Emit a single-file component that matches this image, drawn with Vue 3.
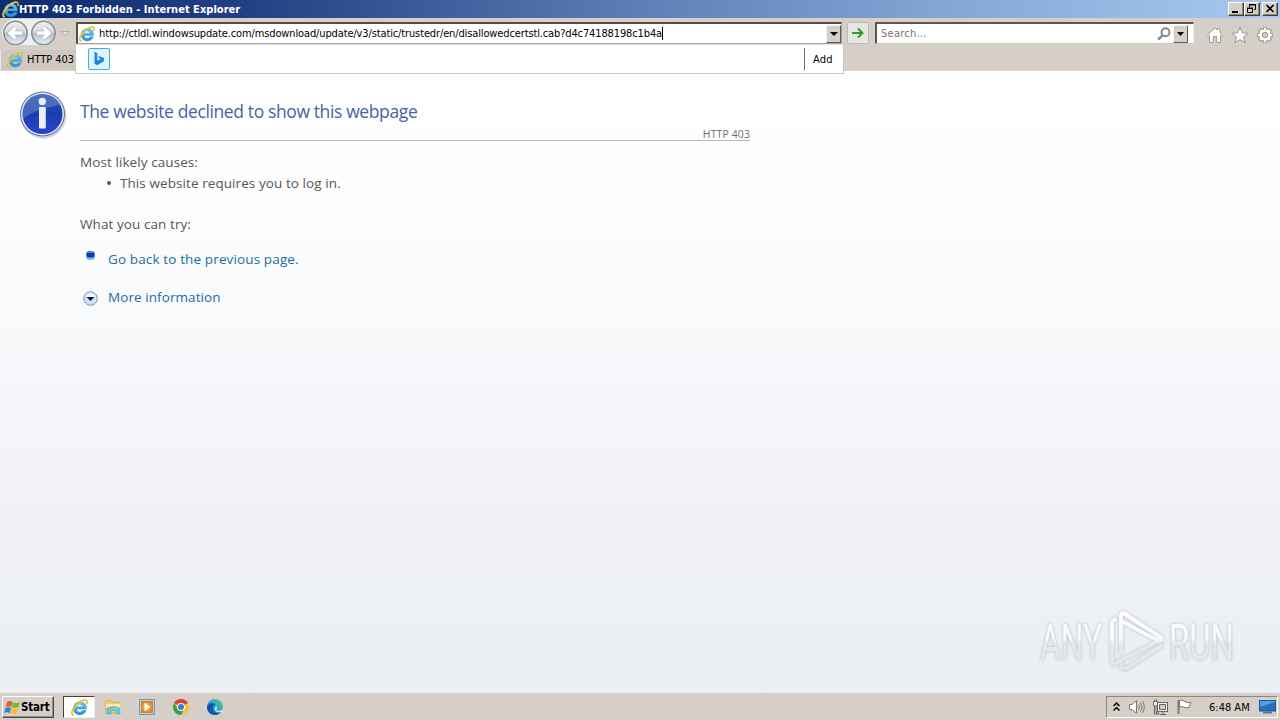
<script setup>
const crumbs = {
  title: 'HTTP 403 Forbidden - Internet Explorer',
  url: 'http://ctldl.windowsupdate.com/msdownload/update/v3/static/trustedr/en/disallowedcertstl.cab?d4c74188198c1b4a',
}
</script>

<template>
  <div class="screen">
    <svg class="defs" width="0" height="0">
      <defs>
        <linearGradient id="eBlue" x1="0" y1="0" x2="0" y2="1">
          <stop offset="0" stop-color="#6acbf5" /><stop offset="1" stop-color="#2b8ad0" />
        </linearGradient>
        <linearGradient id="navBall" x1="0" y1="0" x2="0" y2="1">
          <stop offset="0" stop-color="#f0f1f3" /><stop offset=".48" stop-color="#d5d9de" />
          <stop offset=".52" stop-color="#b6bec8" /><stop offset="1" stop-color="#e6f1fa" />
        </linearGradient>
        <linearGradient id="infoBlue" x1="0" y1="0" x2="0" y2="1">
          <stop offset="0" stop-color="#2b55a8" /><stop offset=".5" stop-color="#1c3cae" /><stop offset="1" stop-color="#2a46cc" />
        </linearGradient>
        <linearGradient id="edge" x1="0" y1="1" x2="1" y2="0">
          <stop offset="0" stop-color="#1459a8" /><stop offset=".45" stop-color="#1b9fe0" /><stop offset="1" stop-color="#5fd36a" />
        </linearGradient>
        <linearGradient id="wm" gradientUnits="userSpaceOnUse" x1="0" y1="0" x2="0" y2="66">
          <stop offset="0" stop-color="#fdfdfe" /><stop offset=".45" stop-color="#f8f9fb" /><stop offset=".52" stop-color="#e6e8eb" /><stop offset="1" stop-color="#e2e4e8" />
        </linearGradient>
        <symbol id="ie" viewBox="0 0 16 16">
          <path d="M14.3 10.7H10.8C10.3 11.8 9.3 12.3 8.2 12.3C6.5 12.3 5.4 11.2 5.3 9.5H14.5C14.9 5.4 12.5 2.6 8.6 2.6C4.9 2.6 2.1 5.1 2.1 8.8C2.1 12.5 4.7 15 8.2 15C11.2 15 13.4 13.4 14.3 10.7ZM5.4 7.2C5.6 5.8 6.8 4.9 8.3 4.9C9.8 4.9 11 5.8 11.1 7.2Z" fill="url(#eBlue)" stroke="#3a90c8" stroke-width=".4" fill-rule="evenodd" />
          <path d="M2.7 15.2C-.3 15 .4 11 3.3 7.3C6.7 2.8 12 .1 14.3 1.2C15.4 1.8 15.2 3.4 14.6 4.8" fill="none" stroke="#e8b820" stroke-width="1.5" />
          <path d="M2.3 14.3C.7 13.3 2 10 4.3 7.1C7.4 3.4 11.5 1.3 13.7 1.8" fill="none" stroke="#f9e064" stroke-width=".7" />
        </symbol>
      </defs>
    </svg>

    <header class="titlebar">
      <svg class="ie-title" width="17" height="17"><use href="#ie" /></svg>
      <span class="title-text">{{ crumbs.title }}</span>
      <div class="win-buttons">
        <span class="wbtn"><svg width="14" height="12"><path d="M3 9h6" stroke="#000" stroke-width="2" /></svg></span>
        <span class="wbtn"><svg width="14" height="12" fill="none" stroke="#000"><path d="M4.500 4V1.500h6v5H9M4 2h7M2.500 5.500h5v4h-5zM2 5h6" /></svg></span>
        <span class="wbtn close"><svg width="14" height="12"><path d="M3.500 2l7 7M10.500 2l-7 7" stroke="#000" stroke-width="1.6" /></svg></span>
      </div>
    </header>

    <div class="navbar">
      <svg class="nav-balls" width="76" height="27" viewBox="0 0 76 27">
        <path d="M15 1H43C48 1 56 8 56 15C56 22 49 27 43 27H15C7 27 2 22 2 15C2 8 7 1 15 1Z" fill="#f1f2f3" opacity=".9" />
        <g stroke="#858b94" stroke-width="1.5" fill="url(#navBall)">
          <circle cx="15.500" cy="15" r="11.700" /><circle cx="43.500" cy="15" r="11.700" />
        </g>
        <g fill="none" stroke="#a9b0ba" stroke-width="5"><path d="M22.500 15H10M15.500 9.500L10 15L15.500 20.500" /><path d="M36.500 15H49M43.500 9.500L49 15L43.500 20.500" /></g>
        <g fill="none" stroke="#fff" stroke-width="3.500"><path d="M22 15H10M15.500 9.500L10 15L15.500 20.500" /><path d="M37 15H49M43.500 9.500L49 15L43.500 20.500" /></g>
        <path d="M61.500 13.500h8l-4 4z" fill="#e4e1dc" stroke="#b0aca6" />
      </svg>
      <div class="address">
        <svg width="16" height="16"><use href="#ie" /></svg>
        <span class="url">{{ crumbs.url }}</span><i class="caret"></i>
        <span class="drop"><svg width="8" height="4"><path d="M0 0h8L4 4z" /></svg></span>
      </div>
      <div class="go"><svg width="14" height="12" fill="none" stroke="#2f9a20" stroke-width="2"><path d="M1 6h10M7 1.500L11.500 6L7 10.500" /></svg></div>
      <div class="search">
        <span class="placeholder">Search...</span>
        <svg class="lens" width="14" height="14" fill="none" stroke="#85878a" stroke-width="1.900"><circle cx="8.500" cy="5.300" r="4" /><path d="M5.700 8.100L1.200 12.600" stroke-width="2.600" /></svg>
        <span class="drop"><svg width="7" height="4"><path d="M0 0h7L3.500 4z" /></svg></span>
      </div>
      <div class="tools">
        <svg width="18" height="18" viewBox="0 0 18 18"><path d="M1.500 9L9 1.800L11.500 4.200V2.500H14V6.600L16.500 9L15.500 10.200L14.500 9.300V16.500H10.800V10.500H7.300V16.500H3.500V9.300L2.500 10.200Z" fill="#fff" stroke="#9b9a98" /></svg>
        <svg width="18" height="18" viewBox="0 0 18 18"><path d="M9 1.200L11.300 6.800L17 7.200L12.500 10.900L14 16.700L9 13.500L4 16.700L5.500 10.900L1 7.200L6.700 6.800Z" fill="#fff" stroke="#9b9a98" /></svg>
        <svg width="18" height="18" viewBox="0 0 18 18">
          <g stroke="#969492" stroke-width="4"><path d="M9 1V17M1 9H17M3.300 3.300L14.700 14.700M14.700 3.300L3.300 14.700" /><circle cx="9" cy="9" r="4.500" /></g>
          <g stroke="#fff" stroke-width="2"><path d="M9 1.800V16.200M1.800 9H16.200M4 4L14 14M14 4L4 14" /><circle cx="9" cy="9" r="4.800" fill="#fff" /></g>
          <circle cx="9" cy="9" r="2.700" fill="#d5cfc8" stroke="#969492" />
        </svg>
      </div>
    </div>

    <div class="tabs">
      <div class="tab"><svg width="16" height="16"><use href="#ie" /></svg><span>HTTP 403</span></div>
    </div>

    <div class="suggest">
      <svg width="22" height="22" viewBox="0 0 22 22"><rect x=".5" y=".5" width="21" height="21" rx="1.5" fill="#ddf4fd" stroke="#4babd8" /><path d="M6.500 4L9.300 5V12.800L12.600 11L11.100 10.300L10.200 8L16 10V13L9.300 17.200L6.500 15.600Z" fill="#1787e0" /></svg>
      <span class="add">Add</span>
    </div>

    <main class="page">
      <svg class="info" width="50" height="52" viewBox="0 0 50 52">
        <ellipse cx="25.500" cy="26" rx="23" ry="22.800" fill="#777" opacity=".28" />
        <circle cx="24.500" cy="24" r="22.500" fill="#5b6da4" />
        <circle cx="24.500" cy="24" r="21.500" fill="#e3eaf8" />
        <circle cx="24.500" cy="24" r="20" fill="url(#infoBlue)" />
        <path d="M4.500 24A20 20 0 0 1 42 14.500C32 17 13 21 5 29Z" fill="#7fa0d6" opacity=".4" />
        <circle cx="24.300" cy="11.500" r="3.700" fill="#eceef5" /><rect x="21" y="17" width="6.800" height="21.500" rx=".8" fill="#eceef5" />
      </svg>
      <div class="article">
        <h1><span>The website declined to show this webpage</span></h1>
        <div class="code"><span>HTTP 403</span></div>
        <p class="causes">Most likely causes:</p>
        <p class="cause"><i></i><span>This website requires you to log in.</span></p>
        <p class="try">What you can try:</p>
        <div class="link back"><svg width="11" height="11"><rect x="1" y="1" width="9" height="9" rx="3.500" fill="#80b8ee" /><rect x="1.500" y="1.500" width="8" height="6" rx="2.500" fill="#1735b0" /><path d="M2.500 2.500h6" stroke="#6687d4" /></svg><a>Go back to the previous page.</a></div>
        <div class="link more"><svg width="15" height="15"><circle cx="7.500" cy="7.500" r="6.800" fill="#cfe2f3" stroke="#8498ad" /><path d="M2.500 6A5.300 5.300 0 0 1 12.500 6Z" fill="#f5f9fc" /><path d="M3.500 6h8L7.500 10z" fill="#061c48" /></svg><a>More information</a></div>
      </div>
      <svg class="watermark" width="200" height="66" viewBox="0 0 200 66">
        <g class="wm-text" fill="url(#wm)">
          <text x="3" y="51" textLength="62" lengthAdjust="spacingAndGlyphs">ANY</text>
          <text x="132" y="51" textLength="65" lengthAdjust="spacingAndGlyphs">RUN</text>
        </g>
        <g class="wm-mark" transform="translate(72 0)" fill="none" stroke-linejoin="round" stroke-linecap="round" stroke="url(#wm)" stroke-width="4">
          <path d="M12 43V6Q13 3 16 5L52 28.500Q54 31 51 32.500L14 13" /><path d="M6 11Q3 11 3 15V53Q4 56 7 54L49 32" /><path d="M12 55V57Q14 61 18 59L52 37" />
        </g>
      </svg>
    </main>

    <footer class="taskbar">
      <div class="start">
        <svg width="17" height="17" viewBox="0 0 17 17"><path d="M3 3Q6 1 8.500 3L7.300 8Q5 6.500 1.700 8Z" fill="#e66027" /><path d="M9.300 3.300Q12 5 16 3L14.600 8Q11 9.500 8 8.200Z" fill="#77b82a" /><path d="M1.500 9Q4.500 7.600 7 9L5.700 14Q3 12.300 0 14Z" fill="#2f83d5" /><path d="M7.800 9.200Q11 10.700 14.400 9L13 14.300Q9.500 15.700 6.500 14.200Z" fill="#f8bd20" /></svg>
        <span>Start</span>
      </div>
      <div class="task active"><svg width="17" height="17"><use href="#ie" /></svg></div>
      <div class="task"><svg width="18" height="18" viewBox="0 0 18 18"><path d="M1.500 3L6 2L8 4H15V15H2Z" fill="#efcf64" stroke="#cba53e" stroke-width=".7" /><path d="M2 6H16V10H2Z" fill="#fbe99c" /><path d="M3.500 10Q9 7 15.500 10L16 16H12.500V12.500H7V16H3Z" fill="#77c9de" stroke="#49a9c6" stroke-width=".7" /></svg></div>
      <div class="task"><svg width="18" height="18" viewBox="0 0 18 18"><path d="M1.500 1.500H16.500V16.500H1.500Z" fill="#a9d6f3" stroke="#5f9cc4" /><rect x="3" y="3" width="12" height="12" fill="#ef7d15" /><circle cx="9" cy="9" r="4.800" fill="#f39b3c" /><path d="M6.500 4.800L12.500 9L6.500 13.200Z" fill="#fff" /></svg></div>
      <div class="task"><svg width="18" height="18" viewBox="0 0 18 18"><circle cx="9" cy="9" r="8" fill="#fac72e" /><path d="M9 9L2.100 5A8 8 0 0 1 15.900 5Z" fill="#dc3e32" /><path d="M2.100 5A8 8 0 0 0 9 17L12.300 11L6 11Z" fill="#30a14c" /><circle cx="9" cy="9" r="4" fill="#fff" /><circle cx="9" cy="9" r="3" fill="#3379df" /></svg></div>
      <div class="task"><svg width="18" height="18" viewBox="0 0 18 18"><circle cx="9" cy="9" r="8" fill="url(#edge)" /><path d="M1 9C2 5 7 4 10 7C8 6 6 9 7 12C8 15 12 16 15 14C9 20 1 16 1 9Z" fill="#1554a3" /><path d="M10 8C12 10 10 11 10.500 12C12 13.500 15.500 13 17 11V15L14.500 14C10 15 8 12 9 10Z" fill="#e1e2e0" /></svg></div>
      <div class="tray">
        <svg class="chev" width="7" height="10" fill="none" stroke="#000" stroke-width="1.5"><path d="M.5 4L3.500 1L6.500 4M.5 8.500L3.500 5.500L6.500 8.500" /></svg>
        <svg class="snd" width="18" height="16" fill="none" stroke="#797979"><path d="M1.500 5.500H4L8.500 1.500V14.500L4 10.500H1.500Z" fill="#fff" /><path d="M10.500 5.500Q12.500 8 10.500 10.500M12.500 3.500Q15.500 8 12.500 12.500M14.500 2Q18 8 14.500 14" /></svg>
        <svg class="net" width="18" height="17" fill="#f2f0ed" stroke="#666"><rect x="5.500" y="3.500" width="10" height="9" /><path d="M7.500 5.500h6v5h-6z" fill="#d5cfc8" /><path d="M8 15.500h6M11 13v2" /><path d="M1.500 2.500h4v4h-1.500v7.500h3v1h-4.500V6.500h-1zM2.500 .5v2M4.500 .5v2" /></svg>
        <svg class="flag" width="18" height="17"><path d="M3.500 1V15" stroke="#777" stroke-width="2" /><path d="M4.500 1.500Q7 .5 9 2Q12 4.500 16 3.500L14 8.500Q11 9.500 8.500 8Q6 7 4.500 8Z" fill="#fff" stroke="#777" /></svg>
        <span class="clock">6:48 AM</span>
        <svg class="desk" width="17" height="14"><rect x=".5" y=".5" width="16" height="10.500" fill="#2571bf" stroke="#17589c" /><path d="M1 7L16 2V1H1Z" fill="#4f9ee0" /><path d="M4 12.500h9" stroke="#68747c" stroke-width="2" /></svg>
      </div>
    </footer>
  </div>
</template>

<style>
html, body { overflow: hidden; }
</style>

<style scoped>
* { box-sizing: border-box; }
svg { display: block; flex: none; }
.screen { position: relative; width: 1280px; height: 720px; display: flex; flex-direction: column; overflow: hidden; font: 11px/14px "DejaVu Sans Condensed", "DejaVu Sans", sans-serif; color: #000; background: #d5cfc8; white-space: nowrap; }
.defs { position: absolute; }
.titlebar { height: 18px; flex: none; display: flex; align-items: center; padding: 0 2px; background: linear-gradient(90deg, #0c2b70 0%, #234184 20%, #6080b7 51%, #84a8d7 75%, #a7caf0 100%); }
.title-text { padding-top: 1px; color: #fff; font-weight: bold; letter-spacing: .03px; }
.win-buttons { margin-left: auto; display: flex; }
.wbtn { width: 16px; height: 14px; background: #d5cfc8; border: 1px solid; border-color: #fff #404040 #404040 #fff; box-shadow: inset -1px -1px #88847e; }
.wbtn.close { margin-left: 2px; }
.navbar { height: 27px; flex: none; display: flex; }
.address { width: 766px; height: 22px; margin-top: 4px; background: #fff; border: 1px solid #aaa59f; border-top: 2px solid #554b4b; border-left: 2px solid #554b4b; display: flex; align-items: center; padding-left: 1px; }
.url { margin-left: 4px; letter-spacing: -.13px; }
.caret { width: 1px; height: 13px; background: #000; }
.drop { width: 15px; height: 18px; margin-left: auto; background: #d5cfc8; border: 1px solid; border-color: #f7f5f2 #5e5b57 #5e5b57 #f7f5f2; display: flex; align-items: center; justify-content: center; }
.go { width: 22px; height: 22px; margin: 4px 0 0 5px; border: 1px solid #bdbab4; border-radius: 2px; background: #e7e6e3; display: flex; align-items: center; justify-content: center; }
.search { width: 319px; height: 22px; margin: 4px 0 0 6px; padding: 0 5px 0 4px; background: #fff; border-top: 2px solid #5c5551; border-left: 2px solid #5c5551; border-right: 1px solid #eee; border-bottom: 1px solid #ccc8c2; display: flex; align-items: center; }
.placeholder { color: #757575; letter-spacing: .25px; padding-top: 1px; }
.lens { margin-left: auto; margin-right: 2px; }
.search .drop { margin-left: 0; }
.tools { display: flex; gap: 7px; margin: 8px 0 0 12px; }
.tabs { height: 26px; flex: none; padding-top: 5px; border-bottom: 1px solid #d9d4ce; }
.tab { width: 76px; height: 20px; padding-left: 6px; display: flex; align-items: center; gap: 4px; background: #cec8c1; border-left: 1px solid #e9e6e1; }
.tab span { letter-spacing: -.05px; }
.suggest { position: absolute; z-index: 2; left: 75px; top: 44px; width: 769px; height: 30px; background: #fff; border: 1px solid #cac8c6; border-top-color: #ddd; display: flex; align-items: center; padding: 0 0 0 12px; }
.add { margin-left: auto; width: 39px; height: 22px; line-height: 24px; padding-left: 8px; border-left: 1px solid #707070; letter-spacing: .15px; }
.page { position: relative; flex: 1; display: flex; align-items: flex-start; background: linear-gradient(#fff 0%, #fdfdfd 20%, #f8f9fb 42%, #eff1f6 72%, #ebeef2 100%); font-family: "Open Sans", sans-serif; color: #575757; }
.info { margin: 18.500px 0 0 18px; }
.article { width: 670px; margin-left: 12px; font-size: 13.5px; line-height: 20px; letter-spacing: .08px; }
.article p, .article h1 { margin: 0; }
h1 { height: 56px; padding-top: 27px; font-size: 17.5px; line-height: 26px; font-weight: 400; color: #4465a2; letter-spacing: -.38px; }
.code { height: 14px; border-bottom: 1px solid #b8b8b8; font-size: 10.5px; line-height: 14px; text-align: right; color: #6e6e6e; letter-spacing: .1px; }
.causes { padding-top: 11px; }
.cause { display: flex; align-items: center; height: 21px; }
.cause i { width: 4px; height: 4px; border-radius: 50%; background: #575757; margin: 1px 9px 0 27px; }
.try { padding-top: 21px; height: 41px; }
.link { display: flex; color: #1a6ea5; }
.back { margin-top: 15px; letter-spacing: .13px; }
.back svg { margin: 1px 12px 0 5px; }
.more { margin-top: 18px; }
.more svg { margin: 4px 10px 0 3px; }
.watermark { position: absolute; right: 43px; bottom: 17px; overflow: visible; filter: drop-shadow(0 0 1.5px #b6bac1); }
.wm-text { font: 50px Roboto, sans-serif; }
.taskbar { height: 28px; flex: none; display: flex; align-items: center; padding: 1px 2px 0 2px; background: #d5cfc8; border-top: 1px solid #efede9; }
.start { width: 52px; height: 22px; display: flex; align-items: center; padding-left: 1px; font-weight: bold; border: 1px solid; border-color: #fff #504d49 #504d49 #fff; box-shadow: inset -1px -1px #928d87; }
.start span { letter-spacing: -.2px; font-size: 11.5px; }
.task { width: 32px; height: 22px; display: flex; align-items: center; justify-content: center; margin-right: 2px; }
.task.active { background: #fff; margin-left: 9px; border: 1px solid; border-color: #44413e #eee #eee #44413e; }
.tray { margin-left: auto; width: 172px; height: 22px; padding-left: 6px; border: 1px solid; border-color: #8b8781 #fff #fff #8b8781; display: flex; align-items: center; }
.snd { margin-left: 8px; }
.net { margin-left: 6px; }
.flag { margin-left: 5px; }
.clock { margin-left: 16px; letter-spacing: 0; padding-top: 1px; }
.desk { margin-left: auto; margin-right: 1px; }
</style>
